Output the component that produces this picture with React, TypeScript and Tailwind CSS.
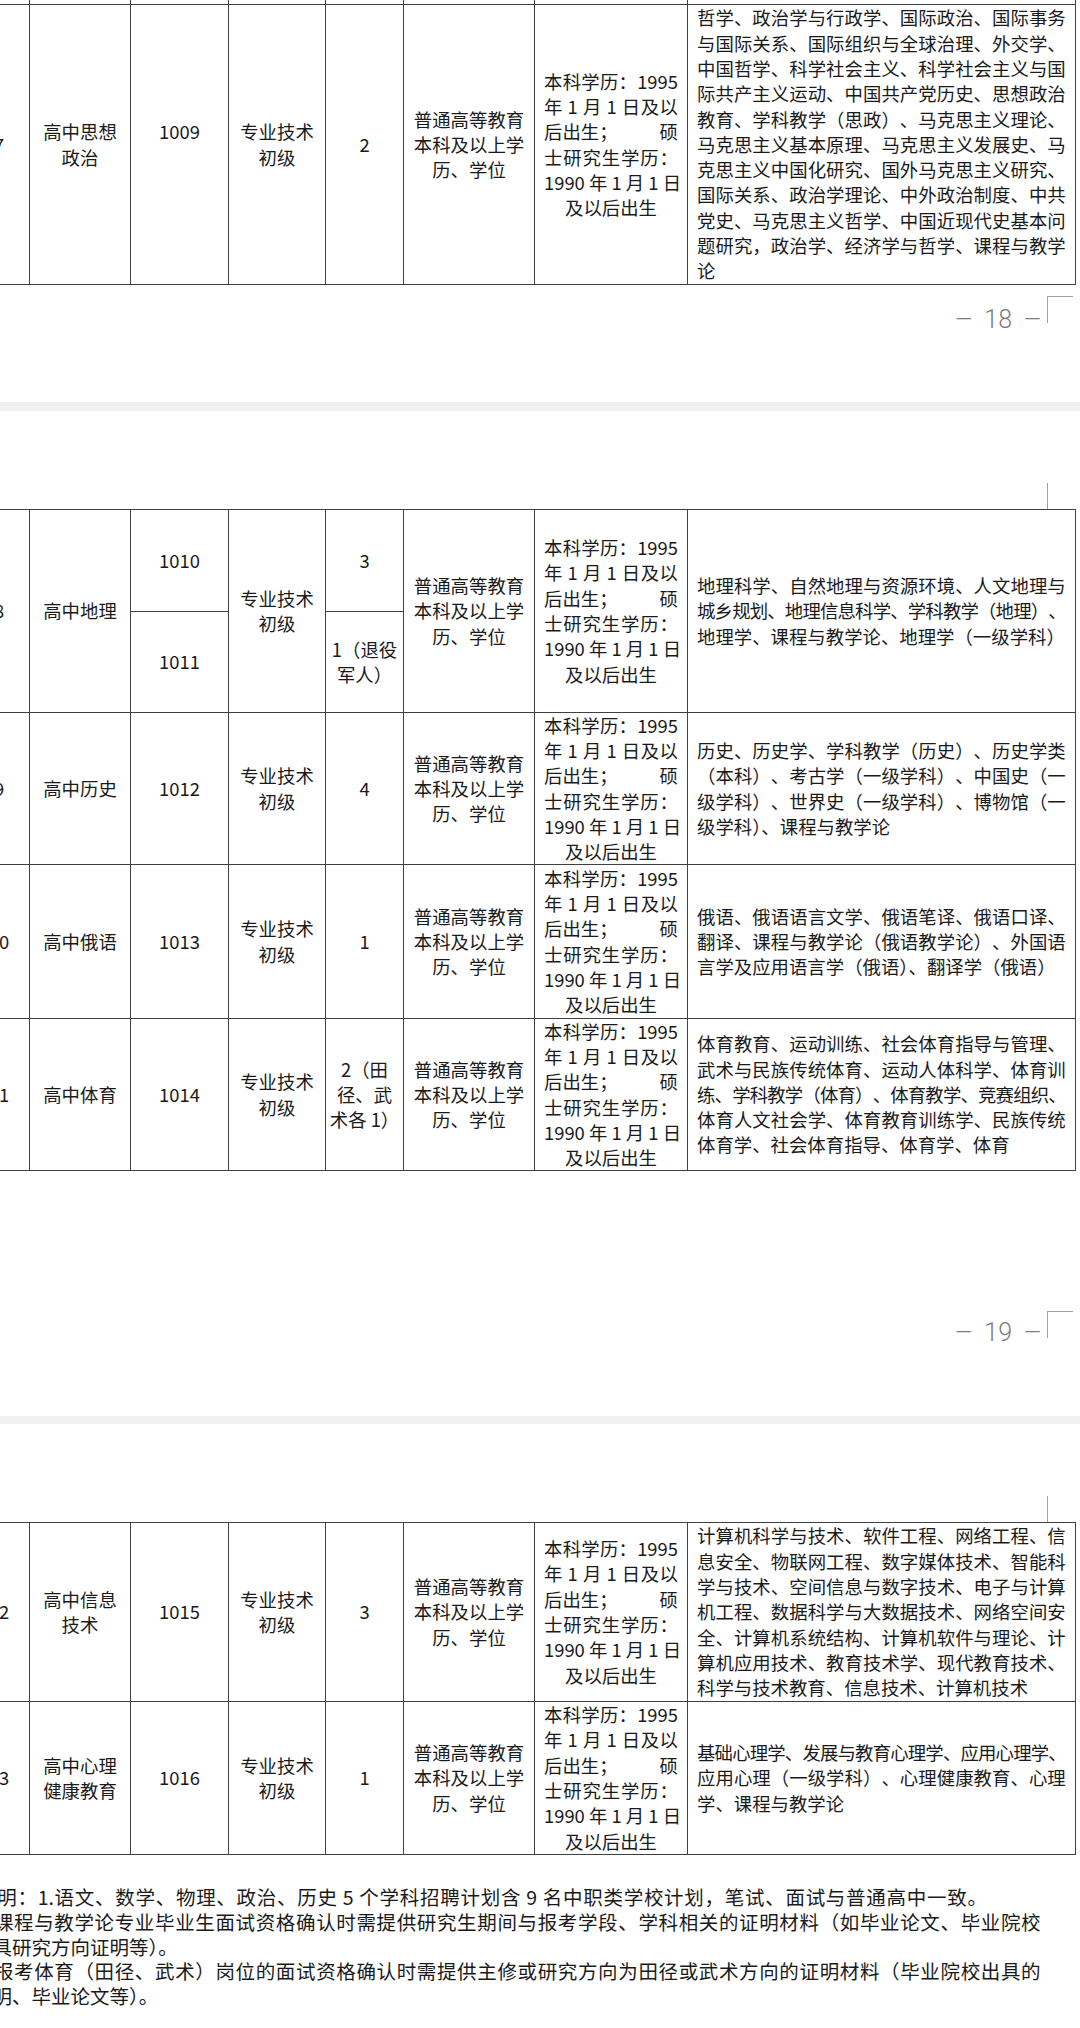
import React from "react";

const BORDER = "border-[#404040]";
const COLW = [
  "w-[61px]",
  "w-[101px]",
  "w-[98px]",
  "w-[97px]",
  "w-[78px]",
  "w-[131px]",
  "w-[153px]",
  "w-[388px]",
];

function tokens(s: string): string[] {
  const out: string[] = [];
  let buf = "";
  for (const ch of Array.from(s)) {
    if (/[0-9A-Za-z.]/.test(ch)) {
      buf += ch;
    } else {
      if (buf) {
        out.push(buf);
        buf = "";
      }
      out.push(ch === " " ? "\u00a0" : ch);
    }
  }
  if (buf) out.push(buf);
  return out;
}

function J({ s, className = "" }: { s: string; className?: string }) {
  return (
    <div className={`flex justify-between whitespace-nowrap ${className}`}>
      {tokens(s).map((t, i) => (
        <span key={i}>{t}</span>
      ))}
    </div>
  );
}

function Cell({
  i,
  children,
  className = "",
}: {
  i: number;
  children?: React.ReactNode;
  className?: string;
}) {
  return (
    <div
      className={`${COLW[i]} shrink-0 border-r ${BORDER} flex items-center justify-center text-center ${className}`}
    >
      {children}
    </div>
  );
}

function Lines({ lines }: { lines: string[] }) {
  return (
    <div>
      {lines.map((l, i) => (
        <div key={i} className="whitespace-nowrap">
          {l}
        </div>
      ))}
    </div>
  );
}

function Edu() {
  return (
    <div className="w-[134px] text-left">
      <J s="本科学历：1995" />
      <J s="年 1 月 1 日及以" />
      <div className="flex justify-between">
        <span>后出生；</span>
        <span>硕</span>
      </div>
      <J s="士研究生学历：" />
      <J s="1990 年 1 月 1 日" />
      <div className="text-center">及以后出生</div>
    </div>
  );
}

function Majors({ lines }: { lines: string[] }) {
  return (
    <div className="w-[369px] text-left">
      {lines.map((l, i) => {
        const last = i === lines.length - 1;
        const tight = Array.from(l).length >= 21;
        if (last) {
          return (
            <div key={i} className="whitespace-nowrap">
              {l}
            </div>
          );
        }
        return (
          <J key={i} s={l} className={tight ? "tracking-[-0.9px]" : ""} />
        );
      })}
    </div>
  );
}

const DEGREE = ["普通高等教育", "本科及以上学", "历、学位"];
const POS = ["专业技术", "初级"];

type RowData = {
  h: string;
  no: string;
  name: string[];
  code: string;
  codeUp?: boolean;
  num: string[];
  majors: string[];
};

function Row({ r }: { r: RowData }) {
  return (
    <div className={`flex border-b ${BORDER} ${r.h}`}>
      <Cell i={0}>{r.no}</Cell>
      <Cell i={1}>
        <Lines lines={r.name} />
      </Cell>
      <Cell i={2}>
        <div className={r.codeUp ? "pb-[25px]" : ""}>{r.code}</div>
      </Cell>
      <Cell i={3}>
        <Lines lines={POS} />
      </Cell>
      <Cell i={4}>
        <Lines lines={r.num} />
      </Cell>
      <Cell i={5}>
        <Lines lines={DEGREE} />
      </Cell>
      <Cell i={6}>
        <Edu />
      </Cell>
      <Cell i={7} className="justify-start pl-[9px]">
        <Majors lines={r.majors} />
      </Cell>
    </div>
  );
}

function Row8() {
  return (
    <div className={`flex border-b ${BORDER} h-[203px]`}>
      <Cell i={0}>8</Cell>
      <Cell i={1}>
        <Lines lines={["高中地理"]} />
      </Cell>
      <div className={`${COLW[2]} shrink-0 border-r ${BORDER} flex flex-col`}>
        <div className={`h-[102px] border-b ${BORDER} flex items-center justify-center`}>
          1010
        </div>
        <div className="flex-1 flex items-center justify-center">1011</div>
      </div>
      <Cell i={3}>
        <Lines lines={POS} />
      </Cell>
      <div className={`${COLW[4]} shrink-0 border-r ${BORDER} flex flex-col text-center`}>
        <div className={`h-[102px] border-b ${BORDER} flex items-center justify-center`}>
          3
        </div>
        <div className="flex-1 flex items-center justify-center">
          <Lines lines={["1（退役", "军人）"]} />
        </div>
      </div>
      <Cell i={5}>
        <Lines lines={DEGREE} />
      </Cell>
      <Cell i={6}>
        <Edu />
      </Cell>
      <Cell i={7} className="justify-start pl-[9px]">
        <Majors
          lines={[
            "地理科学、自然地理与资源环境、人文地理与",
            "城乡规划、地理信息科学、学科教学（地理）、",
            "地理学、课程与教学论、地理学（一级学科）",
          ]}
        />
      </Cell>
    </div>
  );
}

function StubRow() {
  return (
    <div className={`flex border-b ${BORDER} h-[5px]`}>
      {COLW.map((_, i) => (
        <Cell key={i} i={i} />
      ))}
    </div>
  );
}

const ROW7: RowData = {
  h: "h-[280px]",
  no: "7",
  name: ["高中思想", "政治"],
  code: "1009",
  codeUp: true,
  num: ["2"],
  majors: [
    "哲学、政治学与行政学、国际政治、国际事务",
    "与国际关系、国际组织与全球治理、外交学、",
    "中国哲学、科学社会主义、科学社会主义与国",
    "际共产主义运动、中国共产党历史、思想政治",
    "教育、学科教学（思政）、马克思主义理论、",
    "马克思主义基本原理、马克思主义发展史、马",
    "克思主义中国化研究、国外马克思主义研究、",
    "国际关系、政治学理论、中外政治制度、中共",
    "党史、马克思主义哲学、中国近现代史基本问",
    "题研究，政治学、经济学与哲学、课程与教学",
    "论",
  ],
};

const ROWS2: RowData[] = [
  {
    h: "h-[152px]",
    no: "9",
    name: ["高中历史"],
    code: "1012",
    num: ["4"],
    majors: [
      "历史、历史学、学科教学（历史）、历史学类",
      "（本科）、考古学（一级学科）、中国史（一",
      "级学科）、世界史（一级学科）、博物馆（一",
      "级学科）、课程与教学论",
    ],
  },
  {
    h: "h-[154px]",
    no: "10",
    name: ["高中俄语"],
    code: "1013",
    num: ["1"],
    majors: [
      "俄语、俄语语言文学、俄语笔译、俄语口译、",
      "翻译、课程与教学论（俄语教学论）、外国语",
      "言学及应用语言学（俄语）、翻译学（俄语）",
    ],
  },
  {
    h: "h-[152px]",
    no: "11",
    name: ["高中体育"],
    code: "1014",
    num: ["2（田", "径、武", "术各 1）"],
    majors: [
      "体育教育、运动训练、社会体育指导与管理、",
      "武术与民族传统体育、运动人体科学、体育训",
      "练、学科教学（体育）、体育教学、竞赛组织、",
      "体育人文社会学、体育教育训练学、民族传统",
      "体育学、社会体育指导、体育学、体育",
    ],
  },
];

const ROWS3: RowData[] = [
  {
    h: "h-[179px]",
    no: "12",
    name: ["高中信息", "技术"],
    code: "1015",
    num: ["3"],
    majors: [
      "计算机科学与技术、软件工程、网络工程、信",
      "息安全、物联网工程、数字媒体技术、智能科",
      "学与技术、空间信息与数字技术、电子与计算",
      "机工程、数据科学与大数据技术、网络空间安",
      "全、计算机系统结构、计算机软件与理论、计",
      "算机应用技术、教育技术学、现代教育技术、",
      "科学与技术教育、信息技术、计算机技术",
    ],
  },
  {
    h: "h-[153px]",
    no: "13",
    name: ["高中心理", "健康教育"],
    code: "1016",
    num: ["1"],
    majors: [
      "基础心理学、发展与教育心理学、应用心理学、",
      "应用心理（一级学科）、心理健康教育、心理",
      "学、课程与教学论",
    ],
  },
];

function PageNo({
  label,
  box,
  textMt,
}: {
  label: string;
  box: string;
  textMt: string;
}) {
  return (
    <div className={`flex justify-end items-start pr-[7px] ${box}`}>
      <div
        className={`flex items-center gap-[12px] mr-[6px] font-['Roboto',sans-serif] font-light leading-[30px] text-[#7d7d7d] ${textMt}`}
      >
        <span className="text-[22px]">—</span>
        <span className="text-[25px]">{label}</span>
        <span className="text-[22px]">—</span>
      </div>
      <div className="w-[26px] h-[27px] border-l border-t border-[#a0a0a0]" />
    </div>
  );
}

function TopMark() {
  return (
    <div className="h-[98px] flex justify-end items-end pr-[32px]">
      <div className="w-px h-[26px] bg-[#a0a0a0]" />
    </div>
  );
}

export default function App() {
  return (
    <div className="w-[1080px] h-[2028px] overflow-hidden bg-white font-['Noto_Sans_CJK_SC',sans-serif] text-[#1a1a1a] text-[18.4px] leading-[25.3px]">
      {/* Page 18 tail */}
      <div className="ml-[-31px] w-[1107px]">
        <StubRow />
        <Row r={ROW7} />
      </div>
      <PageNo label="18" box="h-[117px] pt-[11px]" textMt="mt-[9px]" />
      <div className="h-[9px] bg-[#eef1ee]" />
      <TopMark />

      {/* Page 19 */}
      <div className={`ml-[-31px] w-[1107px] border-t ${BORDER}`}>
        <Row8 />
        {ROWS2.map((r) => (
          <Row key={r.no} r={r} />
        ))}
      </div>
      <PageNo label="19" box="h-[245px] pt-[140px]" textMt="mt-[7px]" />
      <div className="h-[8px] bg-[#eef1ee]" />
      <TopMark />

      {/* Page 20 */}
      <div className={`ml-[-31px] w-[1107px] border-t ${BORDER}`}>
        {ROWS3.map((r) => (
          <Row key={r.no} r={r} />
        ))}
      </div>

      {/* Notes */}
      <div className="pt-[30px] text-[19.5px] leading-[24.75px] text-[#1a1a1a]">
        <J
          className="ml-[-23px] w-[1010px]"
          s="说明：1.语文、数学、物理、政治、历史 5 个学科招聘计划含 9 名中职类学校计划，笔试、面试与普通高中一致。"
        />
        <J
          className="ml-[-23px] w-[1064px]"
          s="2.课程与教学论专业毕业生面试资格确认时需提供研究生期间与报考学段、学科相关的证明材料（如毕业论文、毕业院校"
        />
        <div className="ml-[-27px] whitespace-nowrap">出具研究方向证明等）。</div>
        <J
          className="ml-[-23px] w-[1064px]"
          s="3.报考体育（田径、武术）岗位的面试资格确认时需提供主修或研究方向为田径或武术方向的证明材料（毕业院校出具的"
        />
        <div className="ml-[-27px] whitespace-nowrap">说明、毕业论文等）。</div>
      </div>
    </div>
  );
}
